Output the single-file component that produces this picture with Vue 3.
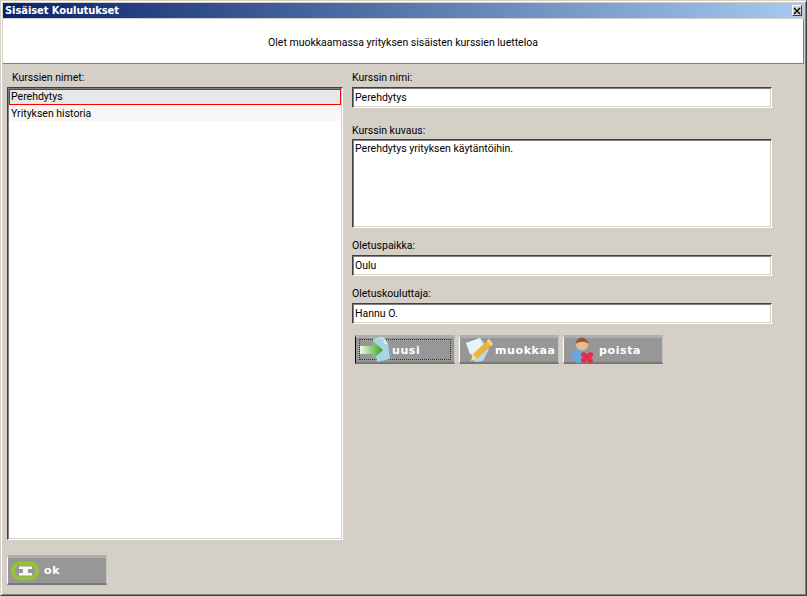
<script setup>
const courses = ['Perehdytys', 'Yrityksen historia']
const fields = [
  { label: 'Kurssin nimi:', value: 'Perehdytys', cls: 'one' },
  { label: 'Kurssin kuvaus:', value: 'Perehdytys yrityksen käytäntöihin.', cls: 'area' },
  { label: 'Oletuspaikka:', value: 'Oulu', cls: 'one' },
  { label: 'Oletuskouluttaja:', value: 'Hannu O.', cls: 'one' }
]
</script>

<template>
  <div class="window">
    <div class="titlebar">
      <span class="title">Sisäiset Koulutukset</span>
      <span class="close">
        <svg width="8" height="8" viewBox="0 0 8 8"><path d="M1 1l6 6M7 1L1 7" stroke="#000" stroke-width="1.4" fill="none"/></svg>
      </span>
    </div>
    <div class="banner">Olet muokkaamassa yrityksen sisäisten kurssien luetteloa</div>
    <div class="main">
      <div class="left">
        <div class="label first">Kurssien nimet:</div>
        <div class="list">
          <div v-for="(c, i) in courses" :key="c" class="item" :class="{ sel: i === 0 }">{{ c }}</div>
        </div>
      </div>
      <div class="right">
        <div v-for="f in fields" :key="f.label" class="field" :class="f.cls + '-field'">
          <div class="label">{{ f.label }}</div>
          <div class="input" :class="f.cls">{{ f.value }}</div>
        </div>
        <div class="actions">
          <button class="btn focus">
            <span class="dots"></span>
            <svg class="ico" width="32" height="28" viewBox="0 0 32 28">
              <defs><linearGradient id="ga" x1="0" x2="1"><stop offset="0" stop-color="#eef6e4"/><stop offset="0.55" stop-color="#8ccc6c"/><stop offset="1" stop-color="#2f9a2a"/></linearGradient></defs>
              <path d="M15 3l10-2 5 7 2 15-13 3z" fill="#a9d4e6"/>
              <path d="M15 3l10-2 1 7 4 0-4-6z" fill="#dceff7"/>
              <path d="M2 10h13V5l10 9-10 9v-5H2z" fill="url(#ga)"/>
            </svg>
            <span class="cap">uusi</span>
          </button>
          <button class="btn">
            <svg class="ico" width="32" height="28" viewBox="0 0 32 28">
              <path d="M4 7l14-5 9 11-6 12-8 1z" fill="#b4dcec"/>
              <path d="M4 7l14-5 3 7-9 10-4-1z" fill="#e8f3f8"/>
              <path d="M27 3l4 5-16 15-6 2 2-7z" fill="#efb238"/>
              <path d="M27 3l4 5-2 2-4-5z" fill="#f6d98a"/>
              <path d="M11 18l4 5-6 2z" fill="#f3dcb0"/>
            </svg>
            <span class="cap tight">muokkaa</span>
          </button>
          <button class="btn">
            <svg class="ico" width="32" height="28" viewBox="0 0 32 28">
              <ellipse cx="13" cy="20" rx="7.5" ry="7" fill="#6aa6da"/>
              <circle cx="16" cy="8" r="6.5" fill="#eab98e"/>
              <path d="M9.5 8a6.5 6.5 0 0 1 13 0c-3-3-9-3-13 0z" fill="#8a5a34"/>
              <path d="M15 17l3-1 3 2 3-2 3 1 0 3-2 2 2 2-1 3-3 0-2-2-3 2-3-1 0-3 2-1-2-2z" fill="#e0304a"/>
            </svg>
            <span class="cap tight">poista</span>
          </button>
        </div>
      </div>
    </div>
    <div class="footer">
      <button class="btn ok">
        <svg class="ico" width="30" height="20" viewBox="0 0 30 20">
          <rect x="3" y="2.5" width="24" height="15" rx="7" fill="none" stroke="#93c432" stroke-width="4"/>
          <path d="M9 5.5h13v2.5h-4v4h4v2.500H9V12h4V8H9z" fill="#f8f8f8"/>
        </svg>
        <span class="cap">ok</span>
      </button>
    </div>
  </div>
</template>

<style>
html, body { margin: 0; padding: 0; background: #d4d0c8; }
</style>

<style scoped>
.window {
  box-sizing: border-box;
  width: 807px;
  height: 596px;
  background: #d4d0c8;
  border-top: 1px solid #d4d0c8;
  border-left: 1px solid #d4d0c8;
  border-right: 1px solid #404040;
  border-bottom: 1px solid #404040;
  box-shadow: inset 1px 1px 0 #fff, inset -1px -1px 0 #808080;
  padding: 2px;
  display: flex;
  flex-direction: column;
  font-family: Roboto, "Liberation Sans", sans-serif;
  font-size: 10.5px;
  color: #000;
}
.titlebar {
  height: 15px;
  flex: none;
  background: linear-gradient(90deg, #0a246a, #a6caf0);
  display: flex;
  align-items: center;
  justify-content: space-between;
  padding: 0 2px 0 2px;
}
.title {
  color: #fff;
  font: bold 10px "DejaVu Sans", sans-serif;
  letter-spacing: -0.1px;
}
.close {
  box-sizing: border-box;
  width: 10px;
  height: 11px;
  background: #d4d0c8;
  border: 1px solid;
  border-color: #fff #404040 #404040 #fff;
  display: flex;
  align-items: center;
  justify-content: center;
}
.banner {
  box-sizing: border-box;
  height: 45px;
  margin-top: 1px;
  flex: none;
  background: #fff;
  border-right: 1px solid #808080;
  border-bottom: 1px solid #808080;
  display: flex;
  align-items: center;
  justify-content: center;
  padding-top: 2px;
}
.main {
  flex: 1;
  display: flex;
  padding: 5px 0 0 4px;
  gap: 9px;
  min-height: 0;
}
.left {
  width: 336px;
  flex: none;
  display: flex;
  flex-direction: column;
}
.label {
  box-sizing: border-box;
  height: 16px;
  line-height: 16px;
  padding-top: 1px;
  margin-bottom: 2px;
}
.first { padding-left: 5px; }
.list {
  box-sizing: border-box;
  height: 453px;
  background: #fff;
  border: 1px solid;
  border-color: #404040 #fff #fff #404040;
  box-shadow: inset 1px 1px 0 #808080, inset -1px -1px 0 #d4d0c8;
  padding: 1px;
  display: flex;
  flex-direction: column;
}
.item {
  box-sizing: border-box;
  height: 16px;
  line-height: 18px;
  padding-left: 2px;
  background: #f8f7f5;
}
.item.sel {
  background: #e8e8e8;
  border: 1px solid #f00;
  padding-left: 1px;
  line-height: 14px;
}
.right {
  width: 420px;
  flex: none;
}
.field { margin-bottom: 9px; }
.one-field:first-child { margin-bottom: 14px; }
.field:nth-child(4) { margin-bottom: 11px; }
.area-field .label { margin-bottom: 1px; }
.input {
  box-sizing: border-box;
  background: #fff;
  border: 1px solid;
  border-color: #404040 #fff #fff #404040;
  box-shadow: inset 1px 1px 0 #808080, inset -1px -1px 0 #d4d0c8;
  padding: 2px;
  line-height: 15px;
}
.one { height: 21px; }
.area { height: 89px; padding-top: 1px; }
.actions {
  display: flex;
  gap: 4px;
  padding-left: 3px;
}
.btn {
  position: relative;
  box-sizing: border-box;
  width: 100px;
  height: 29px;
  padding: 0 0 0 2px;
  margin: 0;
  background: #979797;
  border: 0;
  border-left: 1px solid #fff;
  border-right: 1px solid #c4c4c4;
  border-top: 3px solid #aeaeae;
  border-bottom: 2px solid #777;
  display: flex;
  align-items: center;
  font-family: "DejaVu Sans", sans-serif;
  font-weight: bold;
  font-size: 11px;
  letter-spacing: 0.6px;
  color: #fff;
}
.btn.focus { border-left-color: #000; }
.dots {
  position: absolute;
  left: 3px;
  right: 3px;
  top: 1px;
  bottom: 2px;
  border: 1px dotted #333;
}
.ico { flex: none; position: relative; }
.cap { margin-left: 2px; position: relative; }
.cap.tight { margin-left: 1px; }
.footer {
  flex: none;
  padding: 0 0 8px 4px;
}
.ok { height: 30px; }
.ok .cap { margin-left: 4px; }
</style>
